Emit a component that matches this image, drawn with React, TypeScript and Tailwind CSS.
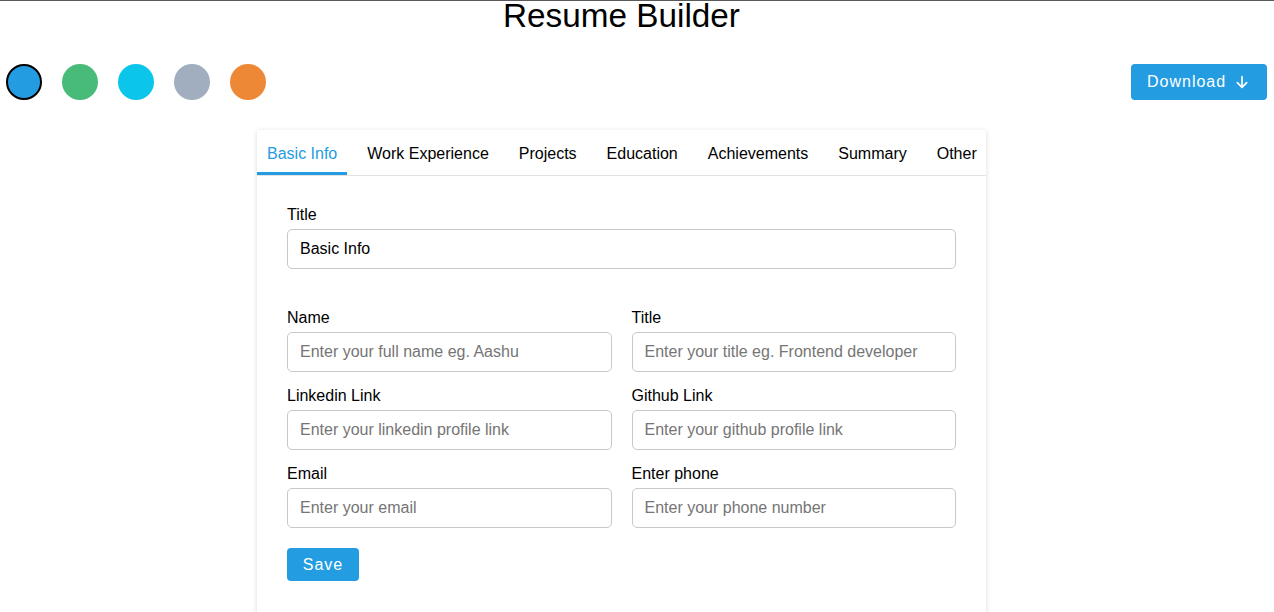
import React from "react";

const font = { fontFamily: '"Liberation Sans", Arial, sans-serif' };

function Field({ label, placeholder, value }: { label: string; placeholder?: string; value?: string }) {
  return (
    <div className="flex flex-col">
      <label className="text-[16px] leading-[19px] text-black mb-[5px]">{label}</label>
      <input
        className="h-[40px] w-full rounded-[5px] border border-[#c8c8c8] px-[12px] text-[16px] text-black placeholder:text-[#757575] outline-none"
        placeholder={placeholder}
        defaultValue={value}
        style={font}
      />
    </div>
  );
}

export default function App() {
  const tabs = ["Basic Info", "Work Experience", "Projects", "Education", "Achievements", "Summary", "Other"];
  const colors = ["bg-[#239ce2]", "bg-[#48bb78]", "bg-[#0bc5ea]", "bg-[#a0aec0]", "bg-[#ed8936]"];
  return (
    <div className="min-h-[612px] bg-white border-t border-[#5a5a5a]" style={font}>
      <div className="w-[1243px]">
        <h1 className="text-center text-[33.3px] leading-[30px] text-black">Resume Builder</h1>
      </div>
      <div className="mt-[33px] flex items-center justify-between pl-[6px] pr-[7px]">
        <div className="flex gap-[20px]">
          {colors.map((c, i) => (
            <div
              key={i}
              className={`h-[36px] w-[36px] rounded-full ${c} ${i === 0 ? "border-2 border-black" : ""}`}
            />
          ))}
        </div>
        <button className="flex h-[36px] w-[136px] items-center rounded-[4px] bg-[#239ce2] pl-[16px] text-[16px] tracking-[1px] text-white">
          Download
          <svg className="ml-[8px]" width="16" height="16" viewBox="0 0 24 24" fill="none" stroke="white" strokeWidth="2.5" strokeLinecap="round" strokeLinejoin="round">
            <path d="M12 4v16" />
            <path d="M5 13l7 7 7-7" />
          </svg>
        </button>
      </div>
      <div className="mt-[30px] pl-[257px]">
        <div className="w-[729px] overflow-hidden bg-white shadow-[0_1px_5px_rgba(0,0,0,0.15)]">
          <div className="flex gap-[10px] border-b border-[#e2e2e2]">
            {tabs.map((t, i) => (
              <div
                key={t}
                className={`flex h-[45px] shrink-0 items-center whitespace-nowrap px-[10px] pt-[3px] text-[16px] ${
                  i === 0 ? "border-b-[3px] border-[#239ce2] pt-[6px] text-[#239ce2]" : "text-black"
                }`}
              >
                {t}
              </div>
            ))}
          </div>
          <div className="px-[30px] pt-[29px] pb-[40px]">
            <Field label="Title" value="Basic Info" />
            <div className="mt-[39px] grid grid-cols-2 gap-x-[20px] gap-y-[14px]">
              <Field label="Name" placeholder="Enter your full name eg. Aashu" />
              <Field label="Title" placeholder="Enter your title eg. Frontend developer" />
              <Field label="Linkedin Link" placeholder="Enter your linkedin profile link" />
              <Field label="Github Link" placeholder="Enter your github profile link" />
              <Field label="Email" placeholder="Enter your email" />
              <Field label="Enter phone" placeholder="Enter your phone number" />
            </div>
            <button className="mt-[20px] h-[33px] w-[72px] rounded-[4px] bg-[#239ce2] text-[16px] tracking-[1px] text-white">
              Save
            </button>
          </div>
        </div>
      </div>
    </div>
  );
}
